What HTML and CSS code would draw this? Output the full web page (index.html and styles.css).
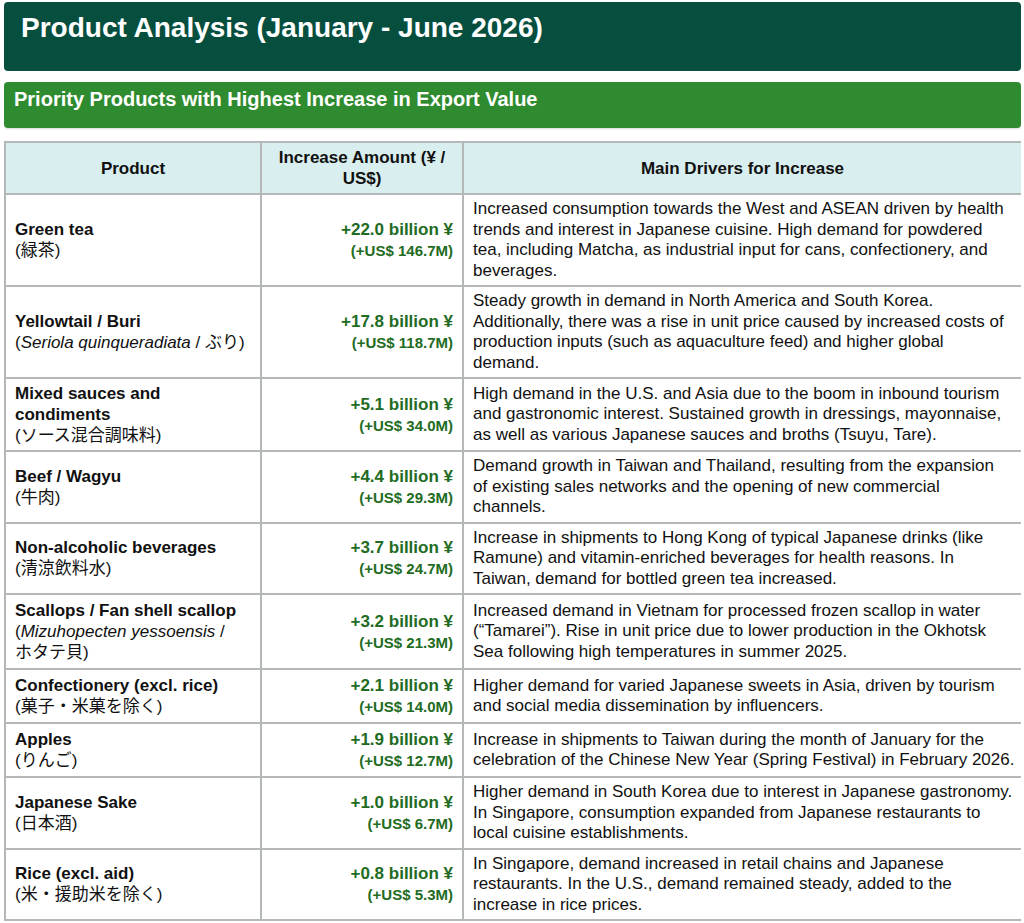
FILE: index.html
```html
<!DOCTYPE html>
<html lang="en">
<head>
<meta charset="utf-8">
<title>Product Analysis (January - June 2026)</title>
<link rel="stylesheet" href="styles.css">
</head>
<body>
<div class="page">
  <header class="title-bar">
    <h1>Product Analysis (January - June 2026)</h1>
  </header>
  <section class="section-bar">
    <h2>Priority Products with Highest Increase in Export Value</h2>
  </section>
  <table class="products">
    <colgroup>
      <col class="c-product">
      <col class="c-amount">
      <col class="c-drivers">
    </colgroup>
    <thead>
      <tr>
        <th>Product</th>
        <th>Increase Amount (¥ /<br>US$)</th>
        <th>Main Drivers for Increase</th>
      </tr>
    </thead>
    <tbody>
      <tr>
        <td class="prod"><b>Green tea</b><br><span class="jp">(緑茶)</span></td>
        <td class="amt"><span class="yen">+22.0 billion ¥</span><br><span class="usd">(+US$ 146.7M)</span></td>
        <td class="drv">Increased consumption towards the West and ASEAN driven by health<br>trends and interest in Japanese cuisine. High demand for powdered<br>tea, including Matcha, as industrial input for cans, confectionery, and<br>beverages.</td>
      </tr>
      <tr>
        <td class="prod"><b>Yellowtail / Buri</b><br><span class="jp nowrap">(<i>Seriola quinqueradiata</i> / ぶり)</span></td>
        <td class="amt"><span class="yen">+17.8 billion ¥</span><br><span class="usd">(+US$ 118.7M)</span></td>
        <td class="drv">Steady growth in demand in North America and South Korea.<br>Additionally, there was a rise in unit price caused by increased costs of<br>production inputs (such as aquaculture feed) and higher global<br>demand.</td>
      </tr>
      <tr>
        <td class="prod"><b>Mixed sauces and<br>condiments</b><br><span class="jp">(ソース混合調味料)</span></td>
        <td class="amt"><span class="yen">+5.1 billion ¥</span><br><span class="usd">(+US$ 34.0M)</span></td>
        <td class="drv">High demand in the U.S. and Asia due to the boom in inbound tourism<br>and gastronomic interest. Sustained growth in dressings, mayonnaise,<br>as well as various Japanese sauces and broths (Tsuyu, Tare).</td>
      </tr>
      <tr>
        <td class="prod"><b>Beef / Wagyu</b><br><span class="jp">(牛肉)</span></td>
        <td class="amt"><span class="yen">+4.4 billion ¥</span><br><span class="usd">(+US$ 29.3M)</span></td>
        <td class="drv">Demand growth in Taiwan and Thailand, resulting from the expansion<br>of existing sales networks and the opening of new commercial<br>channels.</td>
      </tr>
      <tr>
        <td class="prod"><b>Non-alcoholic beverages</b><br><span class="jp">(清涼飲料水)</span></td>
        <td class="amt"><span class="yen">+3.7 billion ¥</span><br><span class="usd">(+US$ 24.7M)</span></td>
        <td class="drv">Increase in shipments to Hong Kong of typical Japanese drinks (like<br>Ramune) and vitamin-enriched beverages for health reasons. In<br>Taiwan, demand for bottled green tea increased.</td>
      </tr>
      <tr class="tall">
        <td class="prod"><b>Scallops / Fan shell scallop</b><br><span class="jp">(<i>Mizuhopecten yessoensis</i> /<br>ホタテ貝)</span></td>
        <td class="amt"><span class="yen">+3.2 billion ¥</span><br><span class="usd">(+US$ 21.3M)</span></td>
        <td class="drv">Increased demand in Vietnam for processed frozen scallop in water<br>(“Tamarei”). Rise in unit price due to lower production in the Okhotsk<br>Sea following high temperatures in summer 2025.</td>
      </tr>
      <tr class="short">
        <td class="prod"><b>Confectionery (excl. rice)</b><br><span class="jp">(菓子・米菓を除く)</span></td>
        <td class="amt"><span class="yen">+2.1 billion ¥</span><br><span class="usd">(+US$ 14.0M)</span></td>
        <td class="drv">Higher demand for varied Japanese sweets in Asia, driven by tourism<br>and social media dissemination by influencers.</td>
      </tr>
      <tr class="short">
        <td class="prod"><b>Apples</b><br><span class="jp">(りんご)</span></td>
        <td class="amt"><span class="yen">+1.9 billion ¥</span><br><span class="usd">(+US$ 12.7M)</span></td>
        <td class="drv">Increase in shipments to Taiwan during the month of January for the<br>celebration of the Chinese New Year (Spring Festival) in February 2026.</td>
      </tr>
      <tr>
        <td class="prod"><b>Japanese Sake</b><br><span class="jp">(日本酒)</span></td>
        <td class="amt"><span class="yen">+1.0 billion ¥</span><br><span class="usd">(+US$ 6.7M)</span></td>
        <td class="drv">Higher demand in South Korea due to interest in Japanese gastronomy.<br>In Singapore, consumption expanded from Japanese restaurants to<br>local cuisine establishments.</td>
      </tr>
      <tr>
        <td class="prod"><b>Rice (excl. aid)</b><br><span class="jp">(米・援助米を除く)</span></td>
        <td class="amt"><span class="yen">+0.8 billion ¥</span><br><span class="usd">(+US$ 5.3M)</span></td>
        <td class="drv">In Singapore, demand increased in retail chains and Japanese<br>restaurants. In the U.S., demand remained steady, added to the<br>increase in rice prices.</td>
      </tr>
    </tbody>
  </table>
</div>
</body>
</html>
```

FILE: styles.css
```css
* {
  box-sizing: border-box;
}

html, body {
  background: #ffffff;
}

body {
  margin: 2px 3px 0 4px;
  font-family: "Liberation Sans", Arial, "Noto Sans CJK JP", sans-serif;
  color: #111111;
}

.page {
  width: 1017px;
  display: flex;
  flex-direction: column;
}

.title-bar {
  background: #064f3f;
  border-radius: 4px;
  height: 69px;
  padding: 10px 17px 0;
}

.title-bar h1 {
  margin: 0;
  color: #ffffff;
  font-size: 28px;
  line-height: 32px;
  font-weight: bold;
}

.section-bar {
  margin-top: 11px;
  background: #2f8b2f;
  border-radius: 4px;
  height: 46px;
  padding: 5px 10px 0;
  box-shadow: 0 1px 2px rgba(0, 0, 0, 0.15);
}

.section-bar h2 {
  margin: 0;
  color: #ffffff;
  font-size: 20px;
  line-height: 24px;
  font-weight: bold;
}

.products {
  margin-top: 13px;
  width: 1017px;
  table-layout: fixed;
  border-collapse: collapse;
  border: 2px solid #b4b8b8;
}

.c-product { width: 256px; }
.c-amount { width: 202px; }
.c-drivers { width: 559px; }

.products th,
.products td {
  border: 2px solid #b4b8b8;
  padding: 4px 9px;
  line-height: 21px;
  vertical-align: middle;
}

.products th {
  background: #d9eeee;
  font-size: 17px;
  font-weight: bold;
  text-align: center;
  color: #111111;
}

.products td {
  font-size: 17px;
}

.products tr.short {
  height: 54px;
}

.products tr.tall {
  height: 75px;
}

.prod {
  padding-left: 9px;
  padding-right: 4px;
}

.prod b {
  font-weight: bold;
}

.jp {
  font-weight: normal;
}

.nowrap {
  white-space: nowrap;
}

.amt {
  text-align: right;
  padding-right: 7px;
  color: #226b22;
  font-weight: bold;
}

.yen {
  font-size: 17px;
}

.usd {
  font-size: 15px;
}

.products td.drv {
  white-space: nowrap;
  padding-left: 9px;
  padding-right: 2px;
  line-height: 20.5px;
}
```
